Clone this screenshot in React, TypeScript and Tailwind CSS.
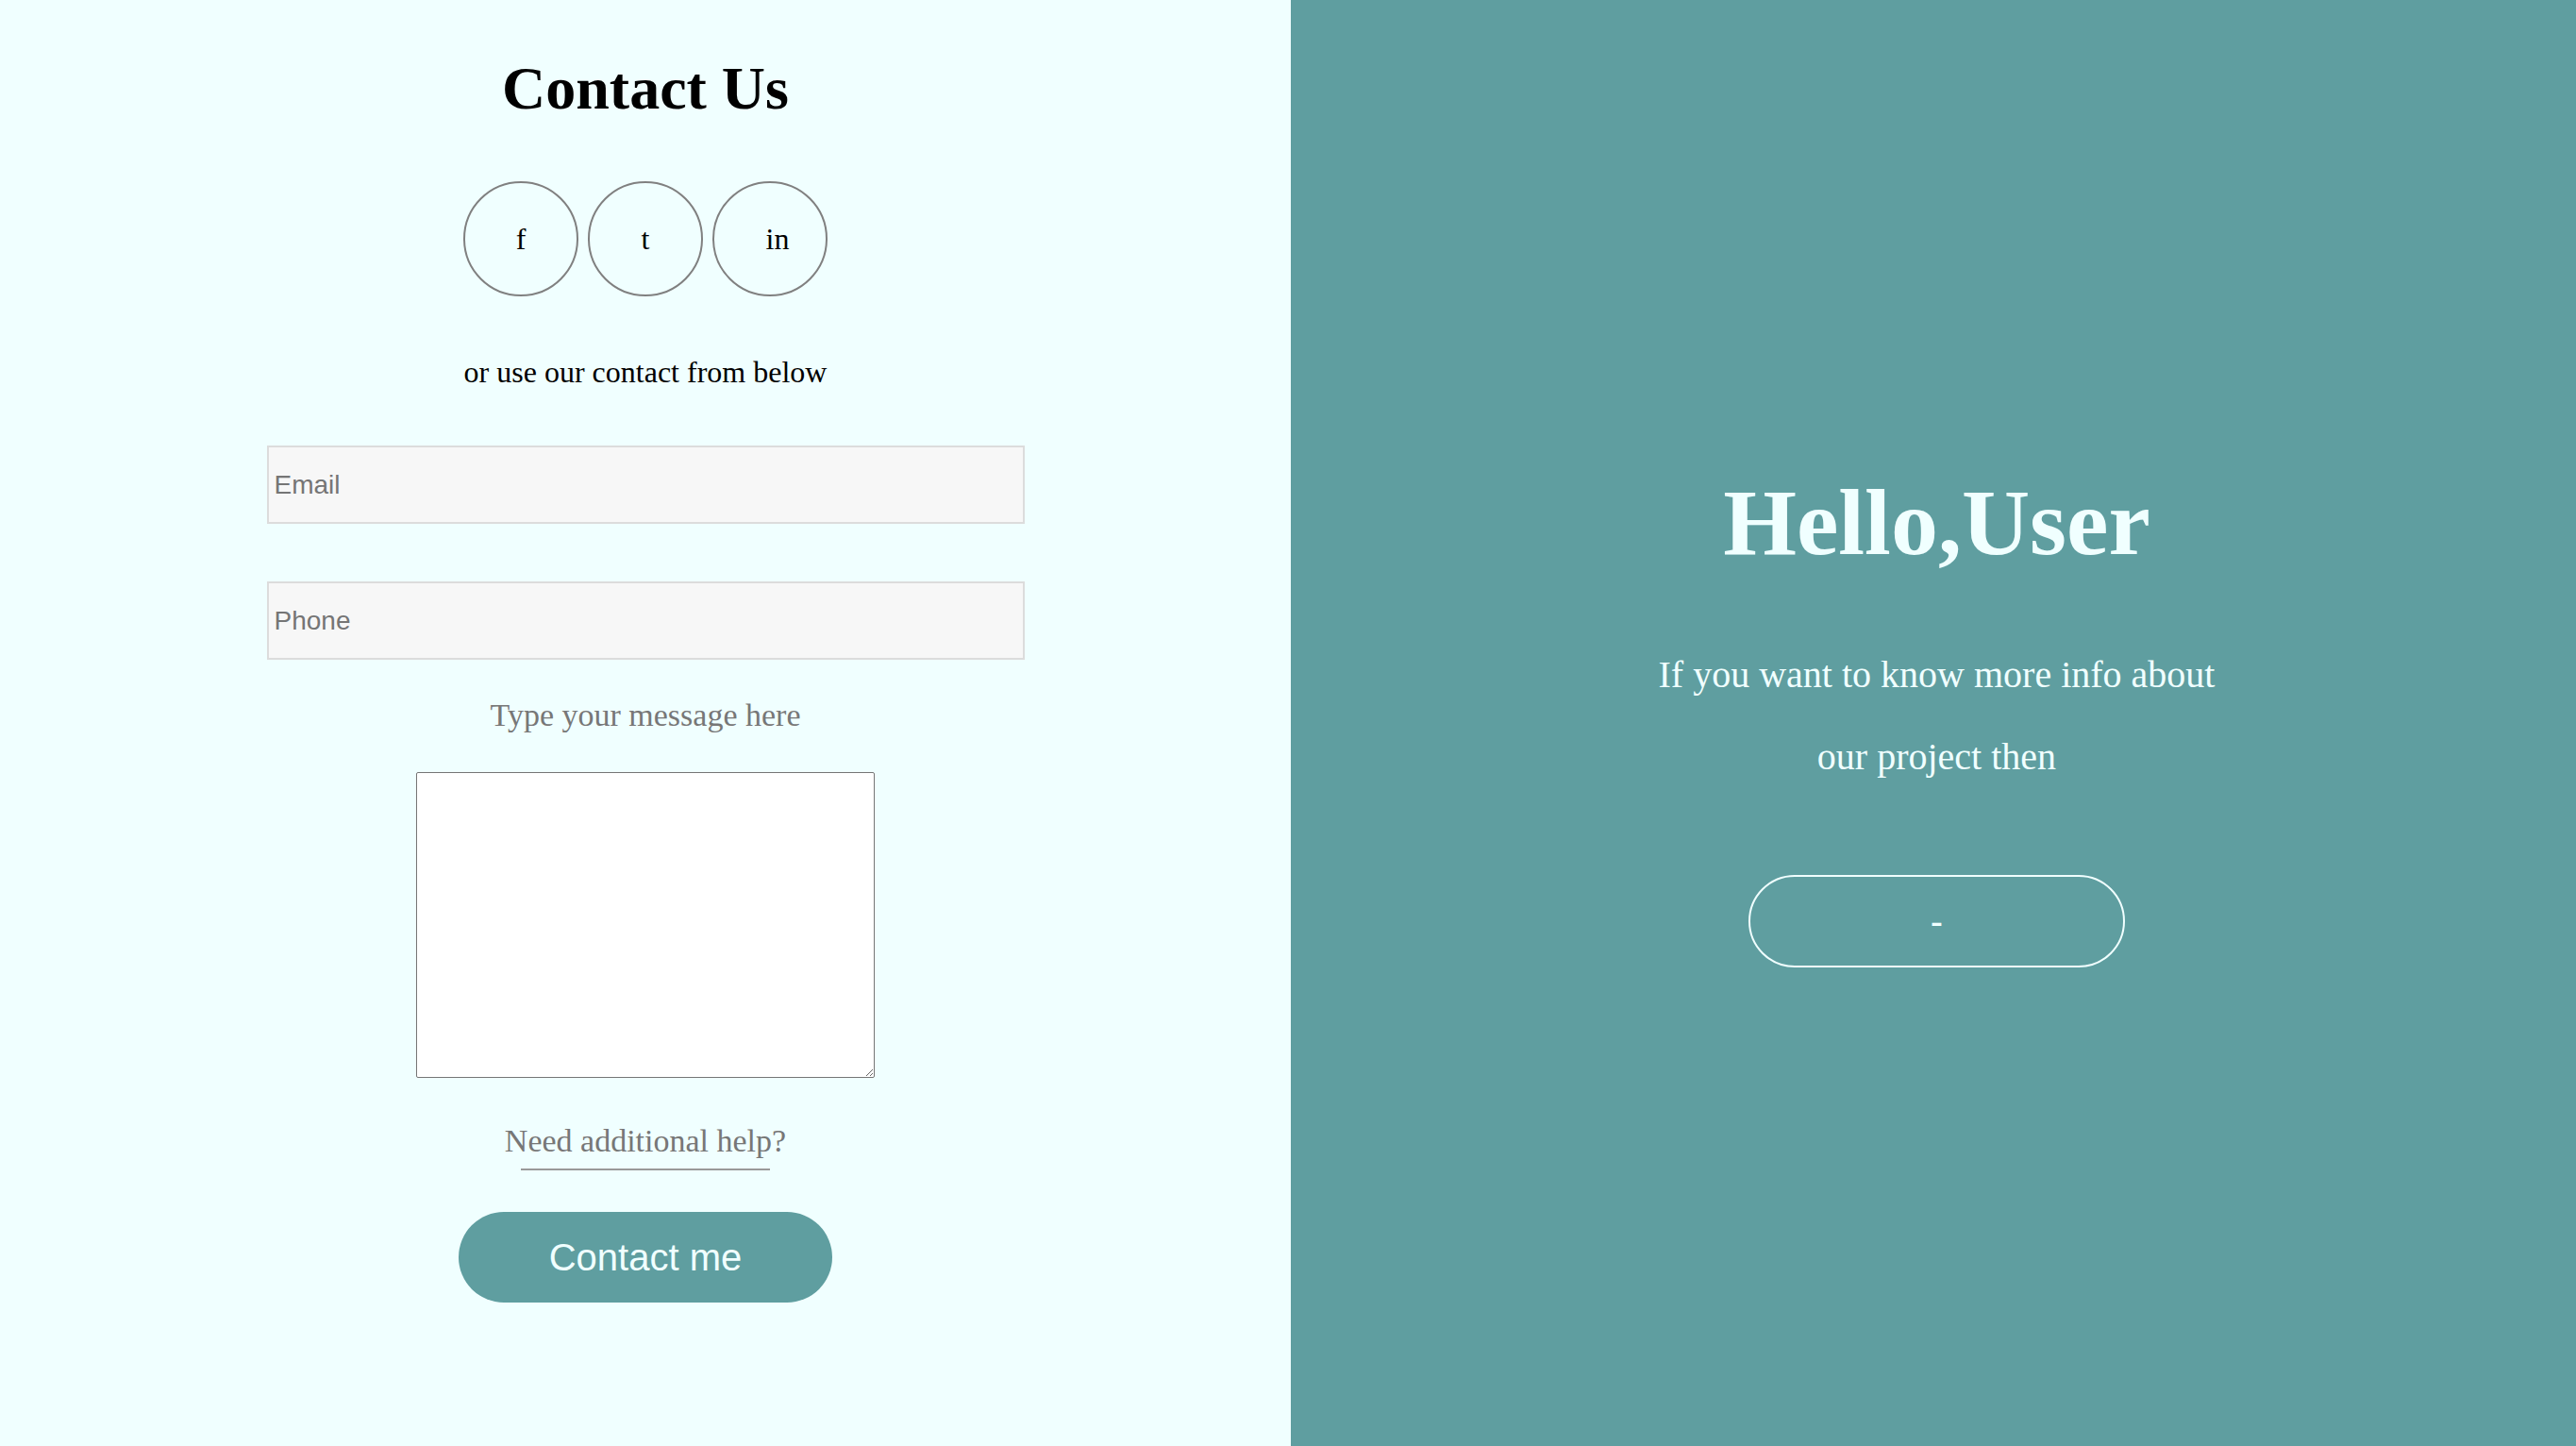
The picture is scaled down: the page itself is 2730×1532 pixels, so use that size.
import { useState } from 'react'

const serif = "font-['Liberation_Serif','Times_New_Roman',serif]"
const sans = "font-['Liberation_Sans',Arial,sans-serif]"

function SocialCircle({ label, shift }: { label: string; shift?: boolean }) {
  return (
    <a
      href="#"
      className={`flex h-[122px] w-[122px] items-center justify-center rounded-full border-2 border-[#808080] text-[32px] leading-none text-black ${serif}`}
    >
      <span className={shift ? 'pl-[16px]' : ''}>{label}</span>
    </a>
  )
}

export default function App() {
  const [email, setEmail] = useState('')
  const [phone, setPhone] = useState('')
  const [message, setMessage] = useState('')

  return (
    <div className="flex h-[1532px] w-full overflow-hidden">
      {/* left: contact form */}
      <div className="flex w-[1368px] shrink-0 flex-col items-center bg-[#f0ffff] pt-[62px]">
        <h1 className={`text-[64px] font-bold leading-[64px] text-black ${serif}`}>Contact Us</h1>

        <div className="mt-[66px] flex gap-[10px]">
          <SocialCircle label="f" />
          <SocialCircle label="t" />
          <SocialCircle label="in" shift />
        </div>

        <p className={`mt-[64px] text-[32px] leading-[32px] text-black ${serif}`}>or use our contact from below</p>

        <input
          type="email"
          placeholder="Email"
          value={email}
          onChange={(e) => setEmail(e.target.value)}
          className={`mt-[62px] h-[83px] w-[803px] border-2 border-[#dcdcdc] bg-[#f7f7f7] pl-[6px] text-[28px] text-[#333] outline-none placeholder:text-[#757575] ${sans}`}
        />
        <input
          type="tel"
          placeholder="Phone"
          value={phone}
          onChange={(e) => setPhone(e.target.value)}
          className={`mt-[61px] h-[83px] w-[803px] border-2 border-[#dcdcdc] bg-[#f7f7f7] pl-[6px] text-[28px] text-[#333] outline-none placeholder:text-[#757575] ${sans}`}
        />

        <p className={`mt-[42px] text-[34px] leading-[34px] text-[#777] ${serif}`}>Type your message here</p>

        <textarea
          value={message}
          onChange={(e) => setMessage(e.target.value)}
          className="mt-[43px] h-[324px] w-[486px] rounded-[2px] border border-[#767676] bg-white outline-none"
        />

        <p className={`mt-[50px] text-[34px] leading-[34px] text-[#777] ${serif}`}>Need additional help?</p>
        <div className="mt-[12px] h-[2px] w-[264px] bg-[#999]" />

        <button className={`mt-[44px] h-[96px] w-[396px] rounded-full bg-[#5f9ea0] text-[40px] text-[#f0ffff] ${sans}`}>
          Contact me
        </button>
      </div>

      {/* right: greeting */}
      <div className="flex flex-1 flex-col items-center bg-[#5f9ea0] pl-[7px] pt-[504px] text-[#f0ffff]">
        <h2 className={`text-[100px] font-bold leading-[100px] ${serif}`}>Hello,User</h2>
        <p className={`mt-[67px] text-center text-[40px] leading-[87px] ${serif}`}>
          If you want to know more info about
          <br />
          our project then
        </p>
        <button className={`mt-[82px] h-[98px] w-[399px] rounded-full border-2 border-[#f0ffff] text-[40px] ${sans}`}>
          -
        </button>
      </div>
    </div>
  )
}
